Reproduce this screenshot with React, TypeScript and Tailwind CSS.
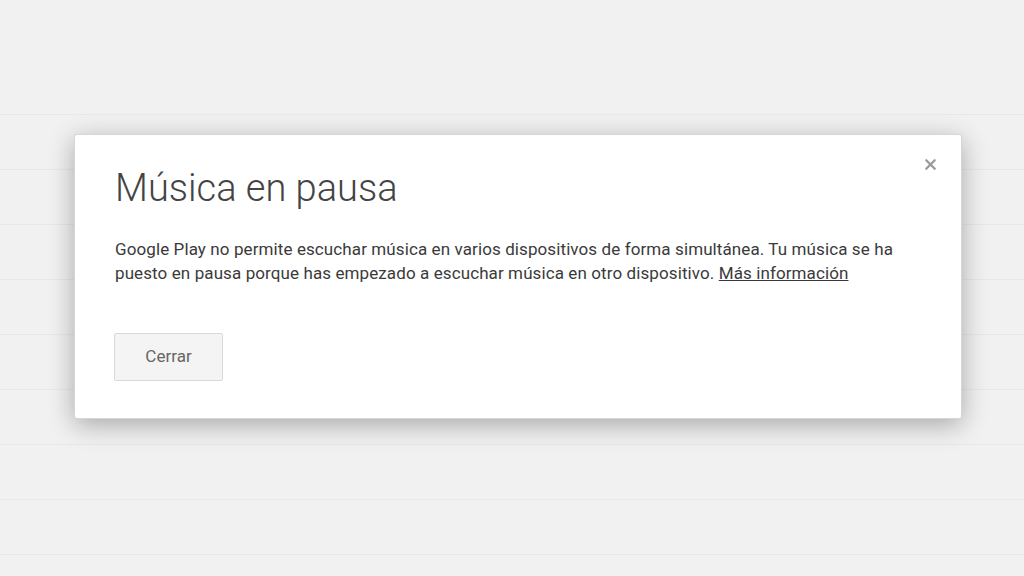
import { X } from 'lucide-react';

const rows = Array.from({ length: 9 });

export default function App() {
  return (
    <div className="relative w-[1024px] h-[576px] overflow-hidden bg-[#f1f1f1] font-['Roboto',sans-serif]">
      {/* fondo: lista apagada detrás del diálogo */}
      <div className="flex flex-col">
        <div className="h-[115px] border-b border-[#e8e8e8]" />
        {rows.map((_, i) => (
          <div key={i} className="h-[55px] border-b border-[#e8e8e8]" />
        ))}
      </div>

      <div className="absolute left-[74px] top-[134px] w-[888px] rounded-[3px] border border-[#d6d6d6] bg-white px-[40px] pt-[34px] pb-[37px] shadow-[0_6px_26px_rgba(0,0,0,0.3)]">
        <button className="absolute right-[22px] top-[21px] text-[#999]">
          <X size={17} strokeWidth={3.2} />
        </button>

        <h2 className="text-[38px] leading-[38px] font-light text-[#444]">Música en pausa</h2>

        <p className="mt-[30px] text-[17px] leading-[24px] tracking-[0.1px] text-[#3a3a3a] whitespace-nowrap">
          Google Play no permite escuchar música en varios dispositivos de forma simultánea. Tu música se ha
          <br />
          puesto en pausa porque has empezado a escuchar música en otro dispositivo.{' '}
          <a className="underline text-[#3a3a3a]">Más información</a>
        </p>

        <button className="mt-[48px] w-[109px] h-[48px] -ml-px rounded-[2px] border border-[#d9d9d9] bg-[#f4f4f4] text-[17px] text-[#666]">
          Cerrar
        </button>
      </div>
    </div>
  );
}
